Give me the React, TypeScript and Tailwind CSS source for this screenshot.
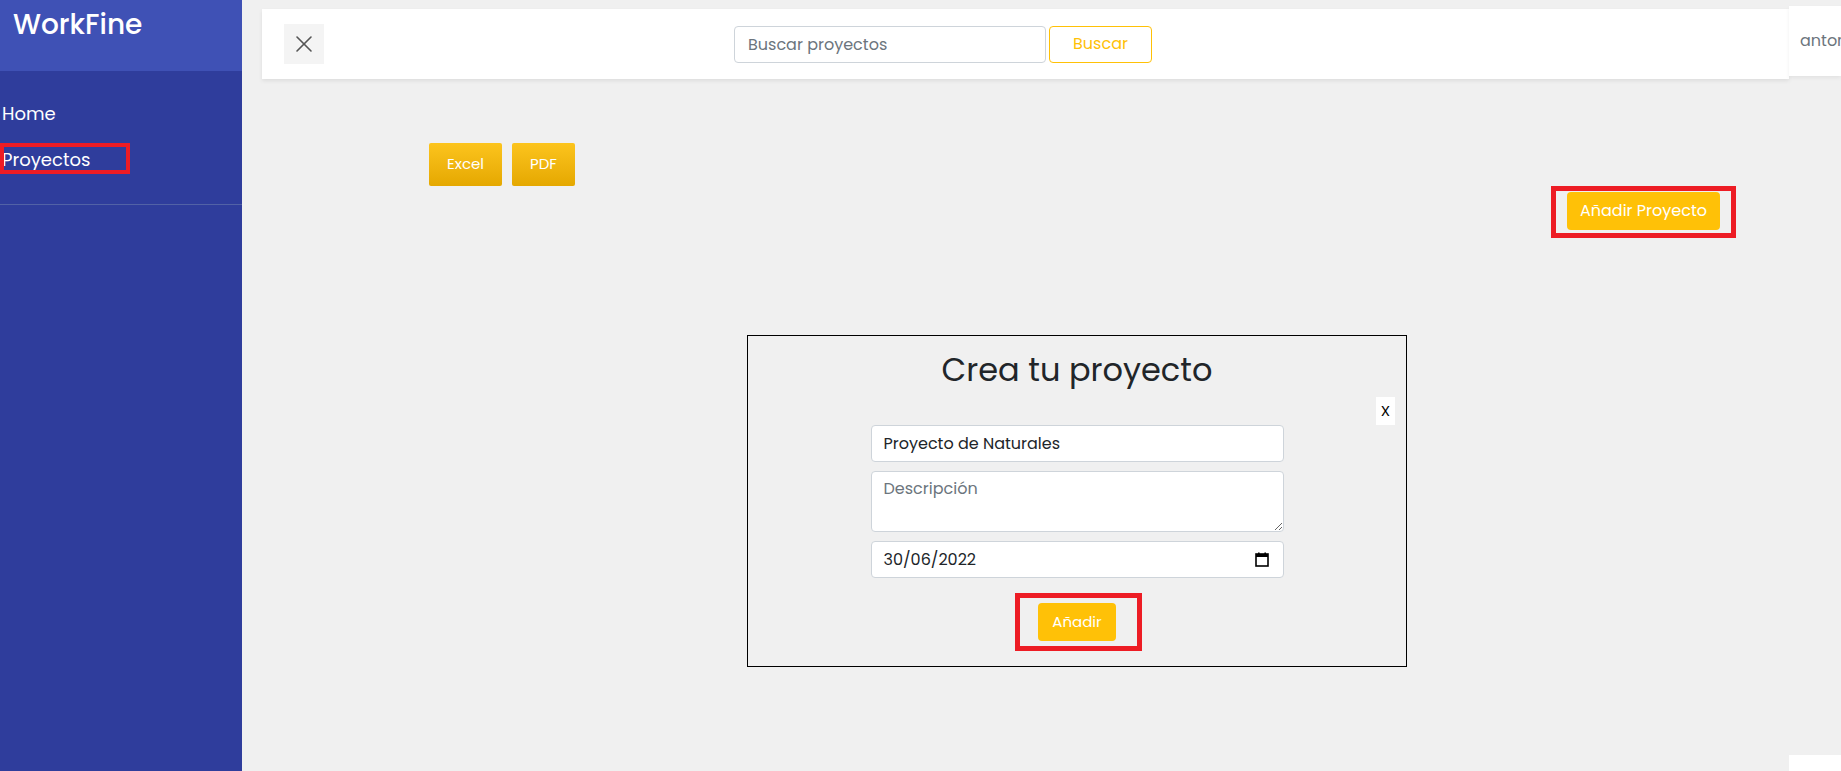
import { X } from 'lucide-react';

const font = { fontFamily: 'Poppins, Inter, "Noto Sans", sans-serif' };

function Sidebar() {
  return (
    <aside className="flex w-[242px] shrink-0 flex-col bg-[#2f3d9c] text-white">
      <div className="h-[71px] bg-[#3f51b5] px-[13px] pt-[5px]">
        <span className="text-[28px] font-medium leading-[40px]">WorkFine</span>
      </div>
      <nav className="relative pt-[31px] pb-[32px] text-[18px] leading-[24px]">
        <div className="px-[2px]">Home</div>
        <div className="mt-[22px] px-[2px]">Proyectos</div>
        {/* annotation box */}
        <div className="absolute left-0 top-[72px] h-[31px] w-[130px] border-4 border-[#ed1c24]" />
      </nav>
      <div className="h-px bg-[#5262a6]" />
    </aside>
  );
}

function TopBar() {
  return (
    <div className="flex">
      <div className="mt-[9px] ml-[20px] flex h-[70px] flex-1 items-center bg-white pl-[22px] shadow-[0_2px_4px_rgba(0,0,0,0.08)]">
        <button className="flex h-[40px] w-[40px] items-center justify-center bg-[#f4f4f4] text-[#555]">
          <X size={28} strokeWidth={1.4} />
        </button>
        <div className="ml-[410px] flex gap-[3px]">
          <input
            readOnly
            placeholder="Buscar proyectos"
            className="h-[37px] w-[312px] rounded-[4px] border border-[#ced4da] bg-white px-[13px] text-[16px] text-[#212529] placeholder:text-[#6c757d] outline-none"
          />
          <button className="h-[37px] w-[103px] rounded-[4px] border border-[#ffc107] text-[16px] text-[#ffc107]">
            Buscar
          </button>
        </div>
      </div>
      <div className="flex w-[52px] flex-col">
        <div className="mt-[6px] flex h-[70px] items-center overflow-hidden bg-white pl-[11px] text-[16px] text-[#6c757d] shadow-[0_2px_4px_rgba(0,0,0,0.06)]">
          anton
        </div>
      </div>
    </div>
  );
}

function CalendarIcon() {
  return (
    <svg width="14" height="15" viewBox="0 0 14 15">
      <rect x="1" y="2" width="12" height="12" fill="none" stroke="#000" strokeWidth="1.6" />
      <rect x="1" y="2" width="12" height="3" fill="#000" />
      <rect x="3" y="0.5" width="1.6" height="2.5" fill="#000" />
      <rect x="9.4" y="0.5" width="1.6" height="2.5" fill="#000" />
    </svg>
  );
}

function ProjectModal() {
  return (
    <div className="ml-[505px] w-[660px] border border-black pt-[10px] pb-[25px]">
      <h2 className="text-center text-[32px] leading-[48px] text-[#212529]">Crea tu proyecto</h2>
      <div className="mt-[3px] flex justify-end pr-[11px]">
        <button className="h-[28px] w-[19px] bg-white text-[15px] text-black">X</button>
      </div>
      <form className="mx-auto flex w-[413px] flex-col gap-[9px]">
        <input
          readOnly
          value="Proyecto de Naturales"
          className="h-[37px] rounded-[4px] border border-[#ced4da] bg-white px-[12px] text-[16px] text-[#212529] outline-none"
        />
        <textarea
          readOnly
          placeholder="Descripción"
          className="h-[61px] rounded-[4px] border border-[#ced4da] bg-white px-[12px] py-[5px] text-[16px] text-[#212529] placeholder:text-[#6c757d] outline-none"
        />
        <div className="flex h-[37px] items-center justify-between rounded-[4px] border border-[#ced4da] bg-white pl-[12px] pr-[14px] text-[16px] text-[#212529]">
          <span>30/06/2022</span>
          <CalendarIcon />
        </div>
        <div className="relative mt-[16px] flex justify-center">
          <button
            type="button"
            className="h-[38px] w-[78px] rounded-[4px] bg-[#ffc107] text-[15px] text-white"
          >
            Añadir
          </button>
          <div className="absolute left-[144px] top-[-10px] h-[58px] w-[127px] border-[5px] border-[#ed1c24]" />
        </div>
      </form>
    </div>
  );
}

export default function App() {
  return (
    <div className="flex h-[771px] w-full overflow-hidden bg-[#f0f0f0]" style={font}>
      <Sidebar />
      <main className="relative flex flex-1 flex-col">
        <TopBar />
        <div className="ml-[187px] mt-[64px] flex gap-[10px]">
          <button className="h-[43px] w-[73px] rounded-[2px] bg-gradient-to-b from-[#fcc41c] to-[#e5a800] text-[15px] text-white">
            Excel
          </button>
          <button className="h-[43px] w-[63px] rounded-[2px] bg-gradient-to-b from-[#fcc41c] to-[#e5a800] text-[15px] text-white">
            PDF
          </button>
        </div>
        <div className="mr-[121px] mt-[6px] flex justify-end">
          <div className="relative">
            <button className="h-[38px] w-[153px] rounded-[4px] bg-[#ffc107] text-[16px] text-white">
              Añadir Proyecto
            </button>
            <div className="absolute left-[-16px] top-[-6px] h-[52px] w-[185px] border-[5px] border-[#ed1c24]" />
          </div>
        </div>
        <div className="mt-[105px]">
          <ProjectModal />
        </div>
        <div className="absolute bottom-0 right-0 h-[16px] w-[52px] bg-white" />
      </main>
    </div>
  );
}
